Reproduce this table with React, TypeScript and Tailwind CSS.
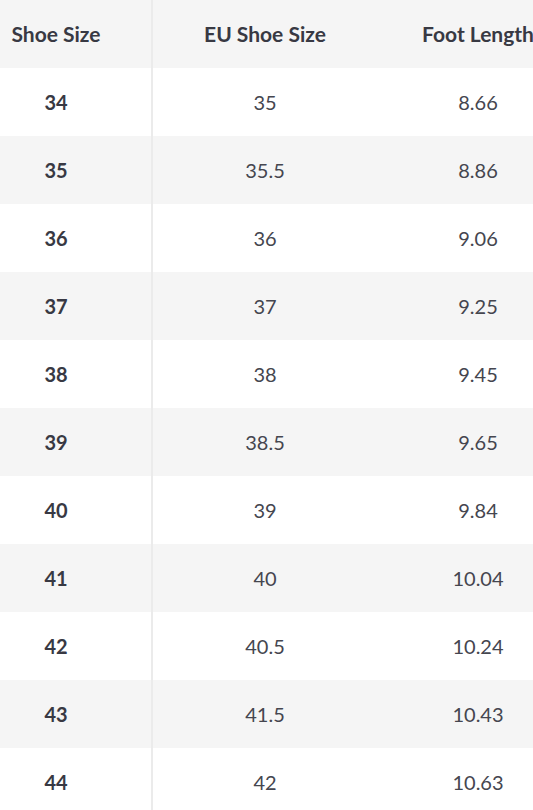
import React from "react";

const rows: [string, string, string][] = [
  ["34", "35", "8.66"],
  ["35", "35.5", "8.86"],
  ["36", "36", "9.06"],
  ["37", "37", "9.25"],
  ["38", "38", "9.45"],
  ["39", "38.5", "9.65"],
  ["40", "39", "9.84"],
  ["41", "40", "10.04"],
  ["42", "40.5", "10.24"],
  ["43", "41.5", "10.43"],
  ["44", "42", "10.63"],
];

export default function App() {
  return (
    <div
      className="w-[533px] h-[810px] overflow-hidden bg-white"
      style={{ fontFamily: "Lato, 'Open Sans', sans-serif" }}
    >
      <div className="flex w-[579px] h-[68px] bg-[#f5f5f5] text-[21px] font-bold text-[#383943]">
        <div className="w-[153px] shrink-0 flex items-center justify-center pr-[39px] border-r-2 border-[#ebebeb]">
          Shoe Size
        </div>
        <div className="w-[224px] shrink-0 flex items-center justify-center">EU Shoe Size</div>
        <div className="w-[202px] shrink-0 flex items-center justify-center">Foot Length</div>
      </div>
      {rows.map((r, i) => (
        <div
          key={r[0]}
          className={`flex w-[579px] h-[68px] text-[20px] text-[#45464f] ${i % 2 === 1 ? "bg-[#f5f5f5]" : "bg-white"}`}
        >
          <div className="w-[153px] shrink-0 flex items-center justify-center pr-[39px] font-bold text-[#383943] border-r-2 border-[#ebebeb]">
            {r[0]}
          </div>
          <div className="w-[224px] shrink-0 flex items-center justify-center">{r[1]}</div>
          <div className="w-[202px] shrink-0 flex items-center justify-center">{r[2]}</div>
        </div>
      ))}
    </div>
  );
}
